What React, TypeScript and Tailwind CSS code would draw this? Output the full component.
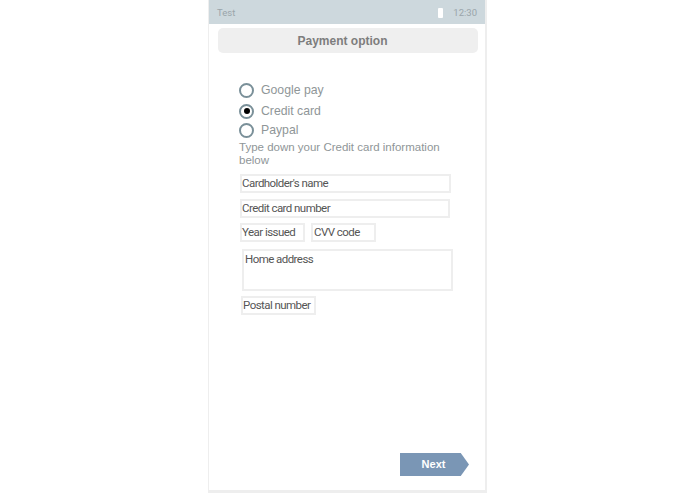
const sans = "font-['Liberation_Sans',sans-serif]";

function Radio({ label, checked, className }: { label: string; checked?: boolean; className: string }) {
  return (
    <div className={`flex items-center gap-[7px] ${className}`}>
      <span className="flex h-[15px] w-[15px] items-center justify-center rounded-full border-[2.5px] border-[#7a9099]">
        {checked && <span className="h-[6px] w-[6px] rounded-full bg-black" />}
      </span>
      <span className={`text-[12.25px] leading-[18px] text-[#8f9698] ${sans}`}>{label}</span>
    </div>
  );
}

function Field({ label, className }: { label: string; className: string }) {
  return (
    <div className={`whitespace-nowrap border-2 border-[#eeeeee] text-[11.5px] leading-[15px] tracking-[-0.55px] text-[#555555] ${className}`}>
      {label}
    </div>
  );
}

export default function App() {
  return (
    <div className="flex h-[494px] w-[695px] justify-center bg-white font-['Roboto',sans-serif]">
      <div className="flex h-[493px] w-[279px] flex-col border-b-[3px] border-l border-r-[2px] border-[#eeeeee]">
        {/* Status bar */}
        <div className="flex h-[24px] shrink-0 items-center bg-[#cdd8dd] pl-[8px] pr-[8px] pt-[2px] text-[9.5px] text-[#9aa5aa]">
          <span>Test</span>
          <span className="ml-auto mr-[10px] h-[10px] w-[5px] rounded-[1px] bg-white" />
          <span>12:30</span>
        </div>

        <div className="flex flex-1 flex-col px-[8px]">
          <div className={`ml-[1px] mr-[-1px] mt-[4px] flex h-[25px] items-center justify-center rounded-[5px] bg-[#efefef] pr-[11px] text-[12px] font-bold text-[#7d7d7d] ${sans}`}>
            Payment option
          </div>

          <Radio label="Google pay" className="ml-[22px] mt-[28px]" />
          <Radio label="Credit card" className="ml-[22px] mt-[3px]" checked />
          <Radio label="Paypal" className="ml-[22px] mt-[1px]" />

          <p className={`ml-[22px] mt-[2px] w-[215px] text-[11.5px] leading-[13px] text-[#8f9698] ${sans}`}>
            Type down your Credit card information below
          </p>

          <Field label="Cardholder's name" className="ml-[23px] mt-[7px] h-[19px] w-[211px]" />
          <Field label="Credit card number" className="ml-[23px] mt-[6px] h-[19px] w-[210px]" />
          <div className="ml-[23px] mt-[5px] flex gap-[6px]">
            <Field label="Year issued" className="h-[19px] w-[65px]" />
            <Field label="CVV code" className="h-[19px] w-[65px] pl-[1px]" />
          </div>
          <Field label="Home address" className="ml-[25px] mt-[7px] h-[42px] w-[211px] pl-[1px] pt-[1px]" />
          <Field label="Postal number" className="ml-[24px] mt-[5px] h-[19px] w-[75px]" />

          <div className={`mb-[14px] ml-[183px] mt-auto flex h-[23px] w-[69px] items-center justify-center bg-[#7a96b5] pr-[2px] text-[11px] font-bold text-white [clip-path:polygon(0_0,88%_0,100%_50%,88%_100%,0_100%)] ${sans}`}>
            Next
          </div>
        </div>
      </div>
    </div>
  );
}
